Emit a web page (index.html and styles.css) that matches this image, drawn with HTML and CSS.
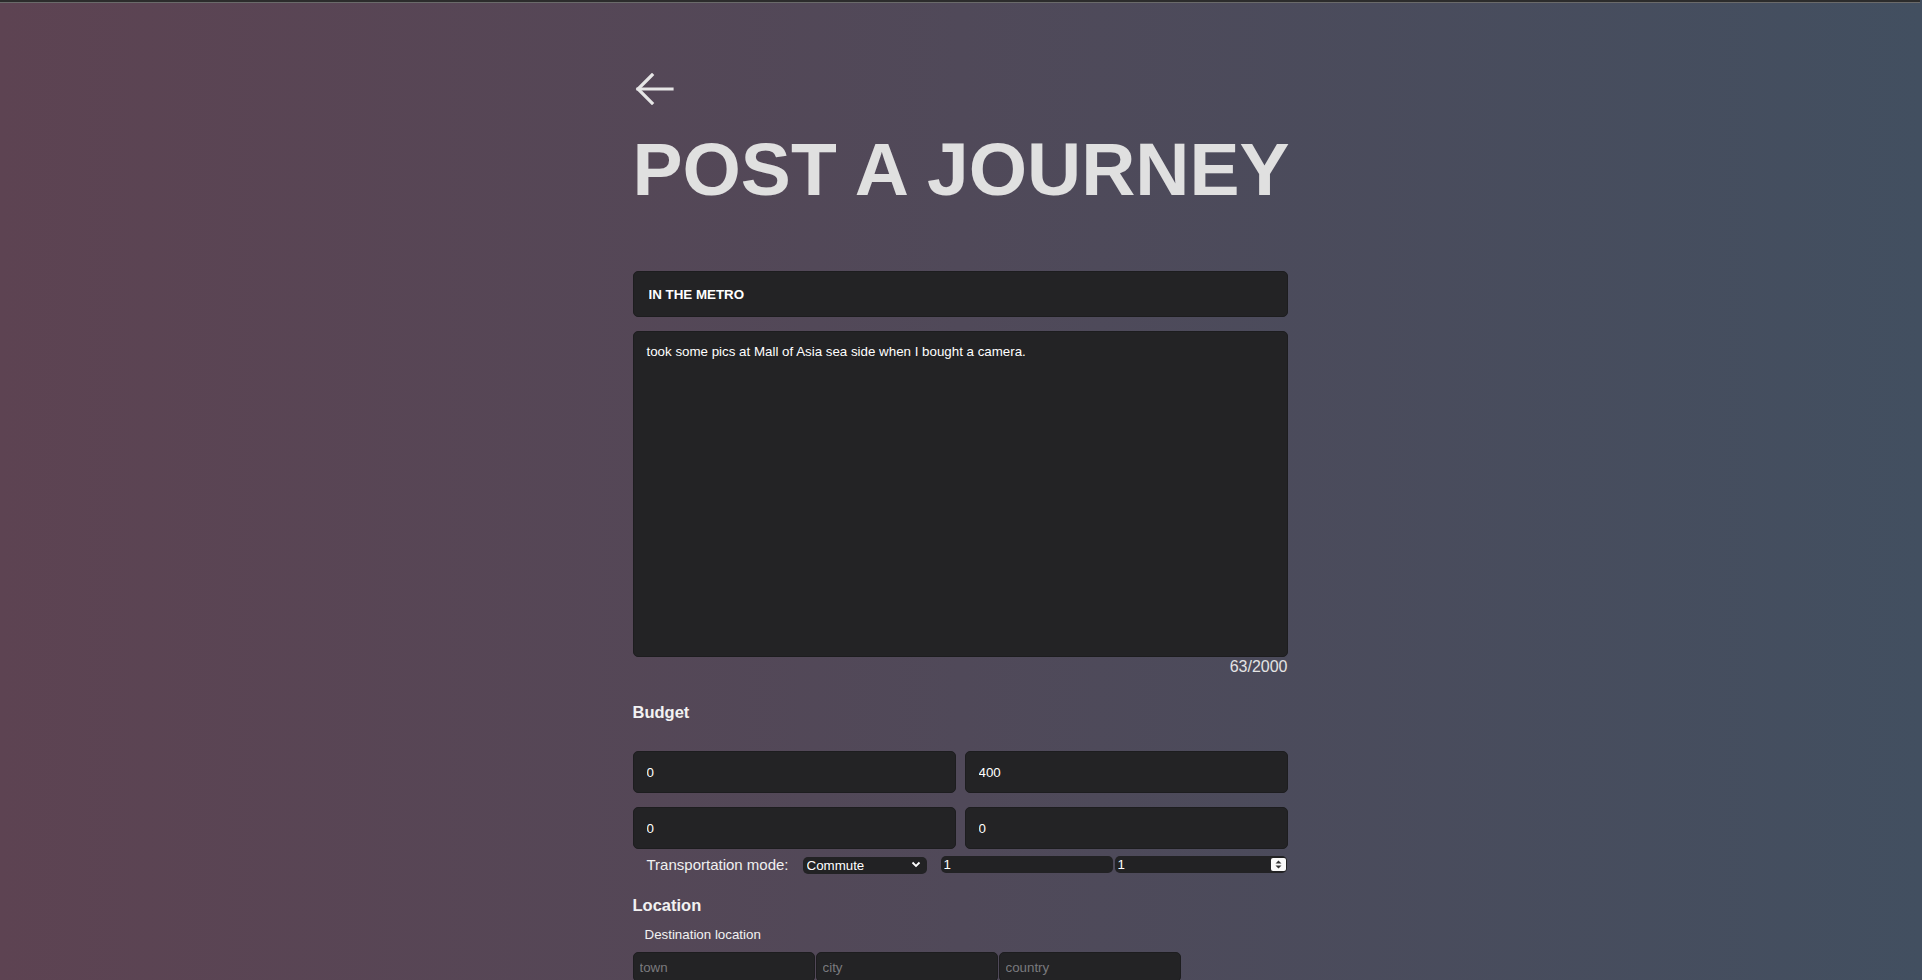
FILE: index.html
```html
<!DOCTYPE html>
<html lang="en">
<head>
<meta charset="utf-8">
<title>Post a Journey</title>
<link rel="stylesheet" href="styles.css">
</head>
<body>
<div class="topbar"></div>
<main class="page">
  <a class="back" href="#" aria-label="Back">
    <svg width="40" height="32" viewBox="0 0 40 32" fill="none" stroke="#e6e6e6" stroke-width="3.2" stroke-linecap="square">
      <path d="M4 16 H38"/>
      <path d="M18 2 L4 16 L18 30"/>
    </svg>
  </a>
  <h1 class="title">POST A JOURNEY</h1>

  <form class="form">
    <input class="field title-field" type="text" value="IN THE METRO">
    <textarea class="field body-field">took some pics at Mall of Asia sea side when I bought a camera.</textarea>
    <div class="counter">63/2000</div>

    <h3 class="section">Budget</h3>
    <div class="pair">
      <input class="field box" type="text" value="0">
      <input class="field box" type="text" value="400">
    </div>
    <div class="pair pair-2">
      <input class="field box" type="text" value="0">
      <input class="field box" type="text" value="0">
    </div>

    <div class="transport">
      <label class="t-label">Transportation mode:</label>
      <span class="select-wrap">
        <select class="mini select">
          <option>Commute</option>
        </select>
        <svg class="chev" width="10" height="7" viewBox="0 0 10 7"><path d="M1.5 1.5 L5 5 L8.5 1.5" fill="none" stroke="#fff" stroke-width="1.8"/></svg>
      </span>
      <input class="mini num" type="text" value="1">
      <span class="num-wrap">
        <input class="mini num" type="text" value="1">
        <span class="spin">
          <svg width="15" height="13" viewBox="0 0 15 13"><path d="M7.5 2.5 L10.5 5.5 H4.5 Z M7.5 10.5 L10.5 7.5 H4.5 Z" fill="#333"/></svg>
        </span>
      </span>
    </div>

    <h3 class="section location">Location</h3>
    <div class="dest-label">Destination location</div>
    <div class="triple">
      <input class="field loc" type="text" placeholder="town">
      <input class="field loc" type="text" placeholder="city">
      <input class="field loc" type="text" placeholder="country">
    </div>
  </form>
</main>
</body>
</html>
```

FILE: styles.css
```css
html, body {
  margin: 0;
  padding: 0;
}
body {
  min-height: 100vh;
  padding-right: 2px;
  background: linear-gradient(to right, #5d4352 0%, #504959 50%, #424f60 100%);
  font-family: "Liberation Sans", Arial, sans-serif;
  color: #eee;
  overflow: hidden;
}
.topbar {
  height: 2px;
  background: #2c2c2c;
  border-bottom: 1px solid #6a6a6a;
}
.page {
  width: 655px;
  margin: 0 auto;
  padding-top: 70px;
}
.back {
  display: block;
  width: 40px;
  height: 32px;
  margin-left: 1px;
}
.back svg { display: block; }
.title {
  margin: 22px 0 0;
  font-size: 75px;
  line-height: 84px;
  font-weight: 700;
  color: #e0e0e0;
  white-space: nowrap;
}
.form {
  margin-top: 60px;
  display: flex;
  flex-direction: column;
}
.field {
  box-sizing: border-box;
  background: #232325;
  border: 1px solid #1d1d1f;
  border-radius: 5px;
  color: #fff;
  font-family: "Liberation Sans", Arial, sans-serif;
  font-size: 13.33px;
  outline: none;
}
.title-field {
  height: 46px;
  padding: 0 15px;
  font-weight: 700;
}
.body-field {
  margin-top: 14px;
  height: 326px;
  padding: 12px 13px;
  resize: none;
  line-height: 15px;
}
.counter {
  text-align: right;
  font-size: 16px;
  line-height: 18px;
  color: #e4e4e4;
  margin-top: 1px;
}
.section {
  margin: 27px 0 0;
  font-size: 16.5px;
  line-height: 19px;
  font-weight: 700;
  color: #f2f2f2;
}
.pair {
  margin-top: 29px;
  display: grid;
  grid-template-columns: 1fr 1fr;
  gap: 9px;
}
.pair-2 { margin-top: 14px; }
.box {
  height: 42px;
  padding: 0 13px;
  width: 100%;
}
.transport {
  margin-top: 7px;
  display: flex;
  align-items: center;
  height: 17px;
}
.t-label {
  font-size: 15px;
  color: #f0f0f0;
  margin-left: 14px;
  width: 156px;
}
.select-wrap {
  position: relative;
  display: block;
  width: 124px;
  height: 17px;
}
.mini {
  box-sizing: border-box;
  height: 17px;
  background: #222224;
  border: none;
  border-radius: 5px;
  color: #fff;
  font-family: "Liberation Sans", Arial, sans-serif;
  font-size: 13.33px;
  outline: none;
}
.select {
  -webkit-appearance: none;
  appearance: none;
  width: 124px;
  padding: 0 4px;
}
.chev {
  position: absolute;
  right: 6px;
  top: 5px;
  pointer-events: none;
}
.num {
  width: 172px;
  padding: 0 3px;
  margin-left: 14px;
}
.num-wrap {
  position: relative;
  display: block;
  margin-left: 2px;
}
.num-wrap .num { margin-left: 0; display: block; }
.spin {
  position: absolute;
  right: 1px;
  top: 2px;
  width: 15px;
  height: 13px;
  background: #fafafa;
  border-radius: 2px;
}
.spin svg { display: block; }
.location {
  margin-top: 23px;
}
.dest-label {
  margin-top: 12px;
  padding-left: 12px;
  font-size: 13.33px;
  line-height: 15px;
  color: #f2f2f2;
}
.triple {
  margin-top: 10px;
  display: flex;
  gap: 1px;
}
.loc {
  width: 182px;
  height: 30px;
  padding: 0 6px;
}
.loc::placeholder {
  color: #7a7a7e;
}
```
